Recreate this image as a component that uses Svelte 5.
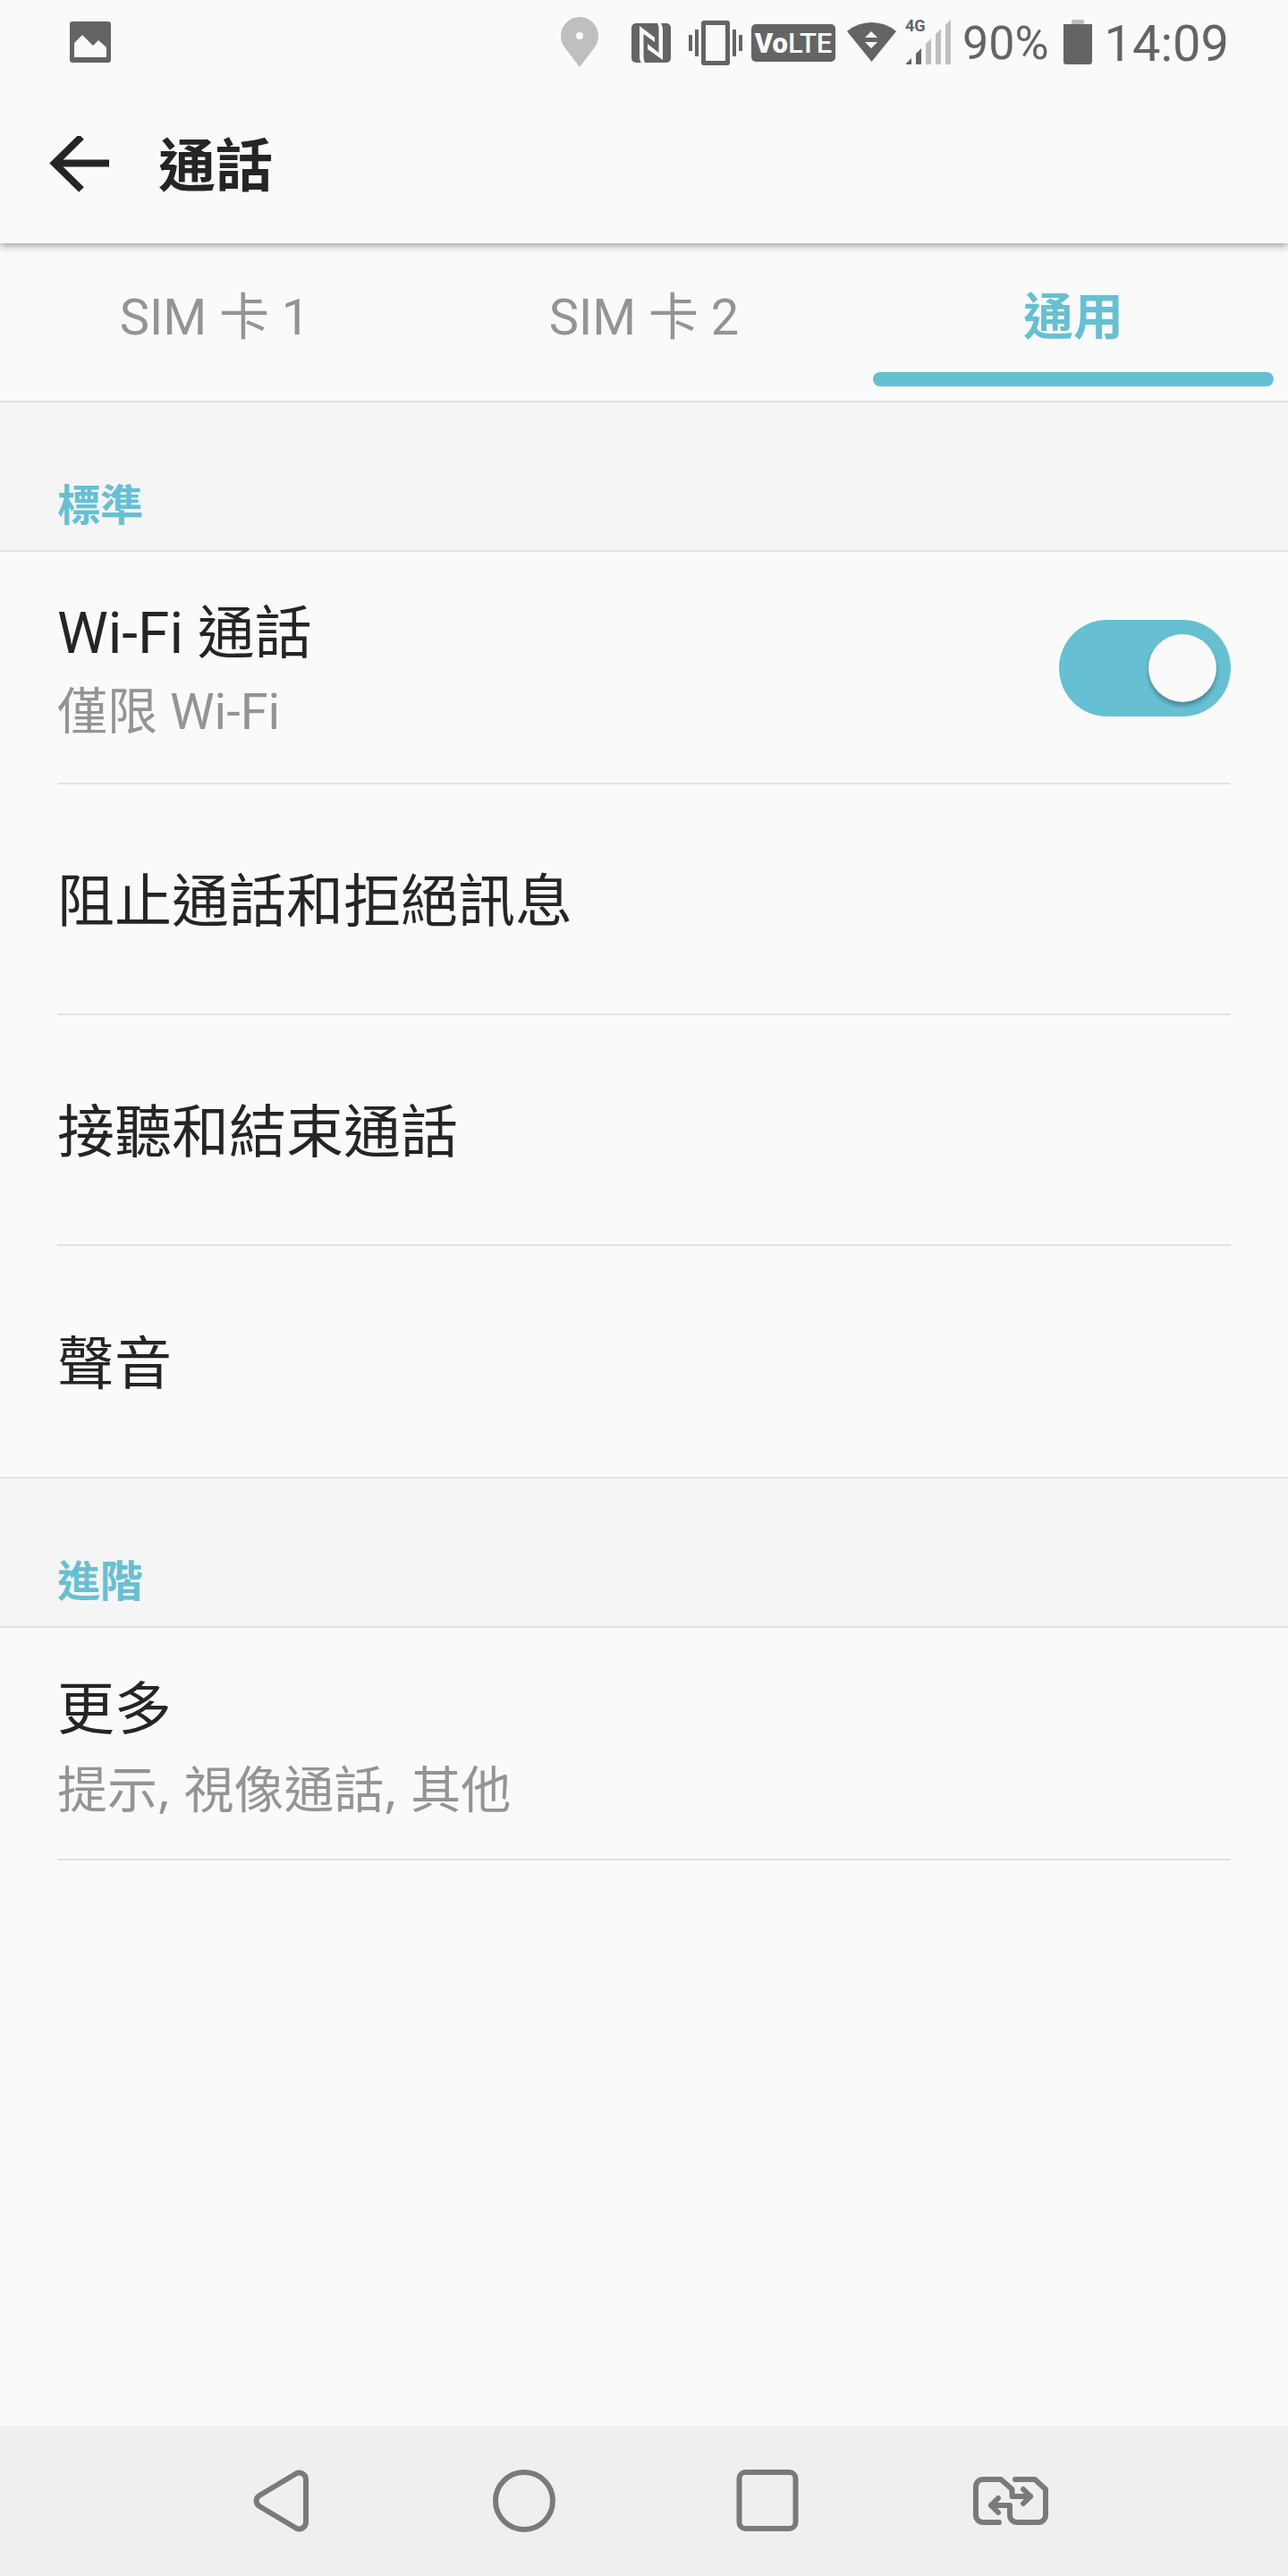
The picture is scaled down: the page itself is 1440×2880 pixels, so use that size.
<script>
  const tabs = ['SIM 卡 1', 'SIM 卡 2', '通用'];
  const standardItems = ['阻止通話和拒絕訊息', '接聽和結束通話', '聲音'];

  let activeTab = $state(2);
  let wifiCalling = $state(true);
</script>

<div class="screen" lang="zh-HK">
  <div class="status-bar">
    <svg width="60" height="96" viewBox="0 0 60 96" aria-hidden="true">
      <rect x="14" y="24" width="46" height="46" rx="3" fill="#646464" />
      <path d="M19 48l9-9 12 12 6-6 9 8v11H19z" fill="#fafafa" />
    </svg>

    <div class="status-bar__right">
      <svg width="68" height="96" viewBox="0 0 68 96" aria-hidden="true">
        <path d="M31 19a21 21 0 0 0-21 21c0 6 2 10 5 14l16 21 16-21c3-4 5-8 5-14a21 21 0 0 0-21-21z" fill="#bfbfbf" />
        <circle cx="31" cy="40" r="4" fill="#fafafa" />
      </svg>
      <svg width="65" height="96" viewBox="0 0 65 96" aria-hidden="true">
        <rect x="11" y="26" width="44" height="44" rx="5" fill="#646464" />
        <path d="M20 29l17 13v5l-12.500-9v25q0 4 1.500 7h-4q-2-2-2-7z" fill="#fafafa" />
        <path d="M46 67L29 55v-6l12.500 10V33q0-5-1.500-7h4q2 3 2 7z" fill="#fafafa" />
      </svg>
      <svg width="60" height="96" viewBox="0 0 60 96" fill="#646464" aria-hidden="true">
        <rect x="0" y="39" width="4" height="18" />
        <rect x="7" y="33" width="4" height="30" />
        <path fill-rule="evenodd" d="M17 23h26a3 3 0 0 1 3 3v44a3 3 0 0 1-3 3H17a3 3 0 0 1-3-3V26a3 3 0 0 1 3-3zm2 5v40h22V28z" />
        <rect x="49" y="33" width="4" height="30" />
        <rect x="56" y="39" width="4" height="18" />
      </svg>
      <span class="volte"><b>Vo</b>LTE</span>
      <svg width="58" height="96" viewBox="0 0 58 96" aria-hidden="true">
        <path d="M3 35a43 43 0 0 1 55 0L30.500 69z" fill="#646464" />
        <path d="M23 42l7-7 7 7zM23 47h14l-7 7z" fill="#fafafa" />
      </svg>
      <svg width="54" height="96" viewBox="0 0 54 96" aria-hidden="true">
        <text class="network" x="0" y="35">4G</text>
        <path d="M1 72v-1l6-6v7zM12 72V60l6-6v18z" fill="#646464" />
        <path d="M23 72V49l6-6v29zM34 72V38l6-6v40zM45 72V28l6-6v50z" fill="#bfbfbf" />
      </svg>
      <span class="battery-level">90%</span>
      <svg width="42" height="96" viewBox="0 0 42 96" aria-hidden="true">
        <rect x="15" y="22" width="14" height="5" fill="#bfbfbf" />
        <path d="M6 27h32v42a3 3 0 0 1-3 3H9a3 3 0 0 1-3-3z" fill="#646464" />
      </svg>
      <time class="clock">14:09</time>
    </div>
  </div>

  <header class="app-bar">
    <button class="app-bar__back" aria-label="返回">
      <svg width="72" height="64" viewBox="0 0 72 64" fill="none" stroke="#252525" stroke-width="8">
        <path d="M39 1L9 30.500 39 60" />
        <path d="M10 30.500h60" />
      </svg>
    </button>
    <h1 class="app-bar__title">通話</h1>
  </header>

  <div class="tabs" role="tablist">
    {#each tabs as tab, i}
      <button
        class="tab"
        class:tab--active={activeTab === i}
        role="tab"
        aria-selected={activeTab === i}
        onclick={() => (activeTab = i)}
      >
        {tab}
      </button>
    {/each}
  </div>

  <main class="content">
    <h2 class="section-title">標準</h2>
    <div class="list">
      <label class="row row--tall">
        <span class="row__text">
          <span class="row__title">Wi-Fi 通話</span>
          <span class="row__summary">僅限 Wi-Fi</span>
        </span>
        <input class="switch" type="checkbox" role="switch" bind:checked={wifiCalling} />
      </label>
      {#each standardItems as item, i}
        <button class="row" class:row--last={i === standardItems.length - 1}>
          <span class="row__text">
            <span class="row__title">{item}</span>
          </span>
        </button>
      {/each}
    </div>

    <h2 class="section-title">進階</h2>
    <div class="list">
      <button class="row row--tall">
        <span class="row__text">
          <span class="row__title">更多</span>
          <span class="row__summary row__summary--list">提示, 視像通話, 其他</span>
        </span>
      </button>
    </div>
  </main>

  <nav class="nav-bar">
    <button class="nav-bar__button" aria-label="返回">
      <svg width="96" height="96" viewBox="0 0 96 96">
        <path d="M78 24v48a7.500 7.500 0 0 1-11 6.500L26 54a7 7 0 0 1 0-12l41-24.500A7.500 7.500 0 0 1 78 24z" />
      </svg>
    </button>
    <button class="nav-bar__button" aria-label="主畫面">
      <svg width="96" height="96" viewBox="0 0 96 96">
        <circle cx="50" cy="48" r="32" />
      </svg>
    </button>
    <button class="nav-bar__button" aria-label="最近使用">
      <svg width="96" height="96" viewBox="0 0 96 96">
        <rect x="18.500" y="16" width="63" height="63" rx="7" />
      </svg>
    </button>
    <button class="nav-bar__button" aria-label="切換 SIM 卡">
      <svg width="96" height="96" viewBox="0 0 96 96">
        <path d="M37 72H19a8 8 0 0 1-8-8V32a8 8 0 0 1 8-8h20l12.500 11v8H72" />
        <path d="M64 35l8 8-8 8" />
        <path d="M55 24h22l12 11v29a8 8 0 0 1-8 8H57a8 8 0 0 1-8-8V53H28" />
        <path d="M36 45l-8 8 8 8" />
      </svg>
    </button>
  </nav>
</div>

<style>
  :global(body) {
    margin: 0;
    background: #fafafa;
  }

  .screen {
    --accent: #66c0d2;
    --text-primary: #252525;
    --text-secondary: #949494;
    --line: #e2e2e2;

    display: flex;
    flex-direction: column;
    min-height: 100vh;
    background: #fafafa;
    color: var(--text-primary);
    font-family: Roboto, "Noto Sans CJK TC", sans-serif;
  }

  svg {
    display: block;
    flex-shrink: 0;
  }

  button {
    padding: 0;
    border: 0;
    background: none;
    color: inherit;
    font: inherit;
    cursor: pointer;
  }

  /* Sits above the app bar so that its shadow only falls downwards */
  .status-bar {
    position: relative;
    z-index: 2;
    display: flex;
    justify-content: space-between;
    height: 96px;
    padding: 0 66px 0 64px;
    background: #fafafa;
    color: #646464;
  }

  .status-bar__right {
    display: flex;
    align-items: center;
    gap: 10px;
  }

  .volte {
    box-sizing: border-box;
    width: 94px;
    height: 42px;
    border-radius: 5px;
    background: #646464;
    color: #fafafa;
    font-size: 31px;
    font-weight: 500;
    line-height: 43px;
    text-align: center;
    white-space: nowrap;
  }

  .volte b {
    font-weight: 900;
  }

  .network {
    fill: #646464;
    font-size: 18px;
    font-weight: 700;
  }

  .battery-level {
    padding-top: 2px;
    font-size: 52px;
    line-height: 96px;
  }

  .clock {
    padding-top: 2px;
    font-size: 56px;
    line-height: 96px;
  }

  .app-bar {
    position: relative;
    display: flex;
    align-items: center;
    gap: 53px;
    height: 176px;
    padding: 0 52px;
    box-shadow: 0 3px 8px rgba(0, 0, 0, 0.36);
  }

  .app-bar__title {
    margin: 0;
    padding-top: 6px;
    font-size: 64px;
    font-weight: 700;
    line-height: 96px;
  }

  .tabs {
    display: grid;
    grid-template-columns: repeat(3, 1fr);
    height: 176px;
  }

  .tab {
    position: relative;
    padding-bottom: 10px;
    color: var(--text-secondary);
    font-size: 56px;
    line-height: 80px;
  }

  .tab--active {
    color: var(--accent);
    font-weight: 700;
  }

  .tab--active::after {
    content: '';
    position: absolute;
    right: 16px;
    bottom: 16px;
    left: 16px;
    height: 16px;
    border-radius: 8px;
    background: var(--accent);
  }

  .content {
    flex: 1;
  }

  .section-title {
    margin: 0;
    padding: 80px 64px 13px;
    border-top: 2px solid var(--line);
    border-bottom: 2px solid var(--line);
    background: #f5f5f5;
    color: var(--accent);
    font-size: 48px;
    font-weight: 700;
    line-height: 72px;
  }

  .list {
    display: flex;
    flex-direction: column;
    padding: 0 64px;
  }

  .row {
    box-sizing: border-box;
    display: flex;
    align-items: center;
    justify-content: space-between;
    min-height: 258px;
    border-bottom: 2px solid var(--line);
    text-align: left;
    cursor: pointer;
  }

  .row--tall {
    min-height: 260px;
  }

  .row--last {
    border-bottom: 0;
  }

  .row__text {
    display: flex;
    flex-direction: column;
    padding-top: 8px;
  }

  .row__title {
    font-size: 64px;
    line-height: 92px;
  }

  .row__summary {
    color: var(--text-secondary);
    font-size: 56px;
    line-height: 82px;
  }

  .row__summary--list {
    font-family: "Noto Sans", "Noto Sans CJK TC", sans-serif;
  }

  .switch {
    appearance: none;
    flex-shrink: 0;
    box-sizing: border-box;
    width: 192px;
    height: 108px;
    margin: 2px 0 0;
    padding: 16px;
    border-radius: 54px;
    background: #c4c4c4;
    cursor: pointer;
  }

  .switch::before {
    content: '';
    display: block;
    width: 76px;
    height: 76px;
    border-radius: 50%;
    background: #fafafa;
    box-shadow: 0 4px 5px rgba(0, 0, 0, 0.3);
  }

  .switch:checked {
    background: var(--accent);
  }

  .switch:checked::before {
    margin-left: auto;
  }

  .nav-bar {
    display: flex;
    justify-content: center;
    height: 168px;
    background: #eeeff1;
  }

  .nav-bar__button {
    display: flex;
    align-items: center;
    justify-content: center;
    width: 272px;
  }

  .nav-bar__button svg {
    fill: none;
    stroke: #797b7a;
    stroke-width: 6;
    stroke-linecap: round;
    stroke-linejoin: round;
  }
</style>
